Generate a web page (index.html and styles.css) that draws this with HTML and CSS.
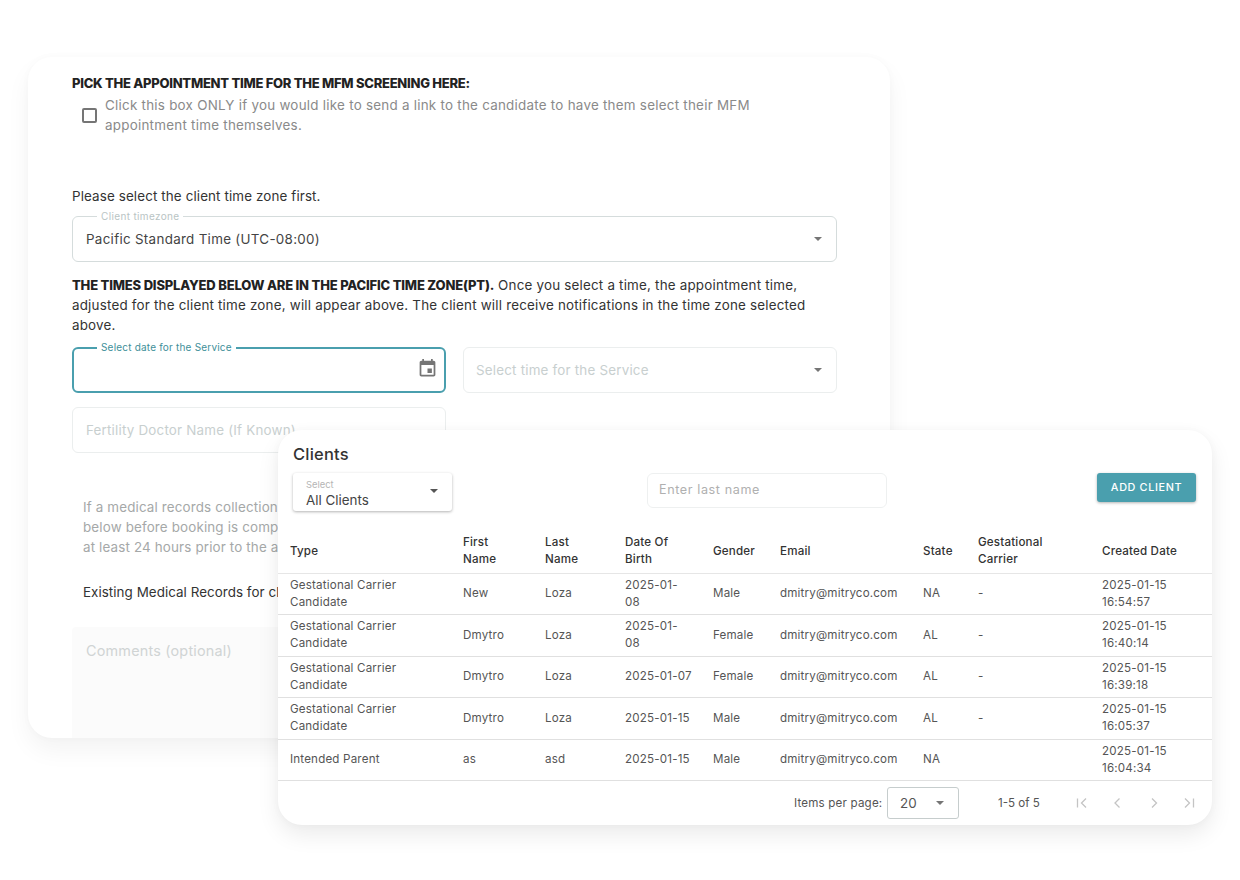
FILE: index.html
```html
<!DOCTYPE html>
<html lang="en">
<head>
<meta charset="utf-8">
<title>Clients</title>
<link rel="stylesheet" href="styles.css">
</head>
<body>
<main class="canvas">
  <section class="window form-card">
    <h2 class="pick-title">PICK THE APPOINTMENT TIME FOR THE MFM SCREENING HERE:</h2>
    <label class="check-row">
      <span class="checkbox"></span>
      <span class="check-text">Click this box ONLY if you would like to send a link to the candidate to have them select their MFM<br>appointment time themselves.</span>
    </label>
    <p class="zone-hint">Please select the client time zone first.</p>
    <div class="field field-zone field-left">
      <span class="float-label">Client timezone</span>
      <span class="field-value">Pacific Standard Time (UTC-08:00)</span>
      <span class="caret"></span>
    </div>
    <p class="times-note"><strong>THE TIMES DISPLAYED BELOW ARE IN THE PACIFIC TIME ZONE(PT).</strong> Once you select a time, the appointment time,<br>adjusted for the client time zone, will appear above. The client will receive notifications in the time zone selected<br>above.</p>
    <div class="field-row">
      <div class="field field-focus">
        <span class="float-label float-teal">Select date for the Service</span>
        <svg class="cal" width="21" height="21" viewBox="0 0 24 24"><path fill="#757575" d="M17 12h-5v5h5v-5zM16 1v2H8V1H6v2H5c-1.110 0-1.990.9-1.990 2L3 19c0 1.100.89 2 2 2h14c1.100 0 2-.9 2-2V5c0-1.100-.9-2-2-2h-1V1h-2zm3 18H5V8h14v11z"/></svg>
      </div>
      <div class="field field-soft">
        <span class="placeholder">Select time for the Service</span>
        <span class="caret"></span>
      </div>
    </div>
    <div class="field-row">
      <div class="field field-soft field-left">
        <span class="placeholder">Fertility Doctor Name (If Known)</span>
      </div>
    </div>
    <div class="records-note">
      <span>If a medical records collection</span>
      <span>below before booking is comp</span>
      <span>at least 24 hours prior to the a</span>
    </div>
    <p class="records-title">Existing Medical Records for cl</p>
    <div class="comments"><span class="placeholder comments-text">Comments (optional)</span></div>
  </section>

  <section class="window clients-card">
    <h2 class="clients-title">Clients</h2>
    <div class="toolbar">
      <div class="filter">
        <span class="filter-label">Select</span>
        <span class="filter-value">All Clients</span>
        <span class="caret caret-dark"></span>
      </div>
      <div class="search">Enter last name</div>
      <button class="add-btn" type="button">ADD CLIENT</button>
    </div>
    <table class="grid">
      <colgroup>
        <col class="c1"><col class="c2"><col class="c3"><col class="c4"><col class="c5"><col class="c6"><col class="c7"><col class="c8"><col class="c9">
      </colgroup>
      <thead>
        <tr><th>Type</th><th>First<br>Name</th><th>Last<br>Name</th><th>Date Of<br>Birth</th><th>Gender</th><th>Email</th><th>State</th><th>Gestational<br>Carrier</th><th>Created Date</th></tr>
      </thead>
      <tbody>
        <tr><td>Gestational Carrier<br>Candidate</td><td>New</td><td>Loza</td><td>2025-01-<br>08</td><td>Male</td><td>dmitry@mitryco.com</td><td>NA</td><td>-</td><td>2025-01-15<br>16:54:57</td></tr>
        <tr><td>Gestational Carrier<br>Candidate</td><td>Dmytro</td><td>Loza</td><td>2025-01-<br>08</td><td>Female</td><td>dmitry@mitryco.com</td><td>AL</td><td>-</td><td>2025-01-15<br>16:40:14</td></tr>
        <tr><td>Gestational Carrier<br>Candidate</td><td>Dmytro</td><td>Loza</td><td>2025-01-07</td><td>Female</td><td>dmitry@mitryco.com</td><td>AL</td><td>-</td><td>2025-01-15<br>16:39:18</td></tr>
        <tr><td>Gestational Carrier<br>Candidate</td><td>Dmytro</td><td>Loza</td><td>2025-01-15</td><td>Male</td><td>dmitry@mitryco.com</td><td>AL</td><td>-</td><td>2025-01-15<br>16:05:37</td></tr>
        <tr><td>Intended Parent</td><td>as</td><td>asd</td><td>2025-01-15</td><td>Male</td><td>dmitry@mitryco.com</td><td>NA</td><td></td><td>2025-01-15<br>16:04:34</td></tr>
      </tbody>
    </table>
    <div class="pager">
      <span class="pager-label">Items per page:</span>
      <div class="page-size"><span>20</span><span class="caret"></span></div>
      <span class="range">1-5 of 5</span>
      <div class="pager-icons">
        <svg width="20" height="20" viewBox="0 0 20 20"><path d="M6.500 5.500v9M15 5.500L10.500 10l4.500 4.500"/></svg>
        <svg width="20" height="20" viewBox="0 0 20 20"><path d="M12.500 5.500L8 10l4.500 4.500"/></svg>
        <svg width="20" height="20" viewBox="0 0 20 20"><path d="M8 5.500L12.500 10 8 14.500"/></svg>
        <svg width="20" height="20" viewBox="0 0 20 20"><path d="M5 5.500L9.500 10 5 14.500M13.500 5.500v9"/></svg>
      </div>
    </div>
  </section>
</main>
</body>
</html>
```

FILE: styles.css
```css
* { box-sizing: border-box; }
html, body { margin: 0; padding: 0; background: #fff; }
body { font-family: "Inter", "Liberation Sans", sans-serif; color: #2b2b2b; }
.canvas { position: relative; width: 1240px; height: 880px; overflow: hidden; }
.window { position: absolute; background: #fff; overflow: hidden; }

.form-card {
  left: 28px; top: 57px; width: 862px; height: 681px;
  padding: 16px 53px 0 44px;
  border-radius: 24px;
  box-shadow: 0 12px 24px rgba(0,0,0,.05), 0 0 8px rgba(0,0,0,.025);
}
.pick-title { margin: 0; font-size: 13px; line-height: 20px; font-weight: 800; letter-spacing: -.26px; color: #222; }
.check-row { display: flex; align-items: center; margin-top: 2px; }
.checkbox { width: 15px; height: 15px; margin: 0 8px 0 10px; border: 2px solid #757575; border-radius: 2px; flex: none; }
.check-text { font-size: 13.4px; line-height: 20px; color: #8a8a8a; letter-spacing: .25px; white-space: nowrap; }
.zone-hint { margin: 51px 0 0; font-size: 13.4px; line-height: 20px; color: #333; letter-spacing: .12px; }
.field { position: relative; height: 46px; border: 1px solid #d5dcdc; border-radius: 6px; display: flex; align-items: center; padding: 0 12px; }
.field-left { padding-left: 13px; }
.field-zone { margin-top: 10px; }
.float-label { position: absolute; left: 24px; top: -7px; padding: 0 4px; background: #fff; font-size: 10px; line-height: 12px; color: #b9c4c4; letter-spacing: .35px; }
.float-teal { color: #3e8f99; letter-spacing: .2px; }
.field-value { font-size: 13.4px; color: #444; letter-spacing: .3px; }
.caret { position: absolute; right: 14px; top: 50%; margin-top: -2px; width: 0; height: 0; border-left: 4.500px solid transparent; border-right: 4.500px solid transparent; border-top: 4.500px solid #757575; }
.times-note { margin: 13px 0 0; font-size: 13.4px; line-height: 20px; color: #333; letter-spacing: .2px; white-space: nowrap; }
.times-note strong { font-size: 13px; font-weight: 800; color: #222; letter-spacing: -.18px; }
.field-row { display: grid; grid-template-columns: 374px 374px; gap: 17px; margin-top: 14px; }
.times-note + .field-row { margin-top: 12px; }
.field-focus { border: 2px solid #4a9fae; }
.field-focus .float-label { left: 23px; top: -8px; }
.cal { position: absolute; right: 6px; top: 9px; }
.field-soft { border-color: #ebeeee; }
.placeholder { font-size: 13.4px; color: #c8cfcf; letter-spacing: .2px; }
.records-note { margin: 44px 0 0 11px; width: 195px; overflow: hidden; white-space: nowrap; font-size: 13.4px; line-height: 20px; color: #a5a8a8; letter-spacing: .15px; display: flex; flex-direction: column; }
.records-title { margin: 25px 0 0 11px; width: 195px; overflow: hidden; white-space: nowrap; font-size: 13.4px; line-height: 20px; color: #333; letter-spacing: .05px; }
.comments { margin-top: 25px; width: 765px; height: 140px; background: #fbfbfb; padding: 13px 14px; border-radius: 4px 4px 0 0; }
.comments-text { font-size: 14.4px; color: #d0d4d4; }

.clients-card {
  left: 278px; top: 430px; width: 934px; height: 395px;
  border-radius: 24px;
  box-shadow: 0 10px 22px rgba(0,0,0,.08), 0 0 8px rgba(0,0,0,.03);
}
.clients-title { margin: 13px 0 0 15px; font-size: 16.500px; line-height: 22px; font-weight: 500; color: #333; letter-spacing: .2px; }
.toolbar { display: flex; align-items: flex-start; margin: 8px 16px 0 15px; }
.filter { position: relative; width: 159px; height: 38px; border-radius: 3px; padding: 6px 13px; box-shadow: 0 1px 3px rgba(0,0,0,.3); display: flex; flex-direction: column; }
.filter-label { font-size: 9.4px; line-height: 12px; color: #b5b5b5; }
.filter-value { font-size: 13.4px; line-height: 18px; color: #444; }
.caret-dark { border-top-color: #555; right: 14px; top: 50%; margin-top: -3px; }
.search { width: 240px; height: 35px; margin-left: 195px; border: 1px solid #eef0f0; border-radius: 6px; padding: 0 11px 2px; display: flex; align-items: center; font-size: 12.6px; color: #b0b0b0; letter-spacing: .6px; }
.add-btn { margin-left: auto; height: 29px; width: 99px; background: #4a9fae; color: #fff; border: 0; border-radius: 3px; font: 500 10.8px "Inter", sans-serif; letter-spacing: .65px; box-shadow: 0 1px 3px rgba(0,0,0,.3); padding: 0; }

.grid { width: 934px; margin-top: 21px; table-layout: fixed; border-collapse: collapse; letter-spacing: .18px; }
.c1 { width: 173px; } .c2 { width: 82px; } .c3 { width: 80px; } .c4 { width: 88px; } .c5 { width: 67px; } .c6 { width: 143px; } .c7 { width: 55px; } .c8 { width: 124px; } .c9 { width: 122px; }
.grid th { height: 41px; padding: 0 0 2px 12px; text-align: left; font-size: 11.6px; line-height: 17px; font-weight: 500; color: #333; border-bottom: 1px solid #e6e6e6; }
.grid td { height: 41.500px; padding: 0 0 0 12px; font-size: 11.6px; line-height: 17px; color: #555; border-bottom: 1px solid #e0e0e0; }
.pager { display: flex; align-items: center; height: 44px; padding-left: 516px; font-size: 11.6px; letter-spacing: .18px; color: #555; }
.pager-label { width: 93px; }
.page-size { position: relative; width: 72px; height: 32px; border: 1px solid #c6cdcd; border-radius: 3px; padding-left: 12px; display: flex; align-items: center; font-size: 13.4px; color: #555; }
.range { margin-left: 39px; width: 73px; letter-spacing: 0; }
.pager-icons { display: flex; gap: 16.300px; }
.pager-icons path { fill: none; stroke: #c4c4c4; stroke-width: 1.300; }
```
